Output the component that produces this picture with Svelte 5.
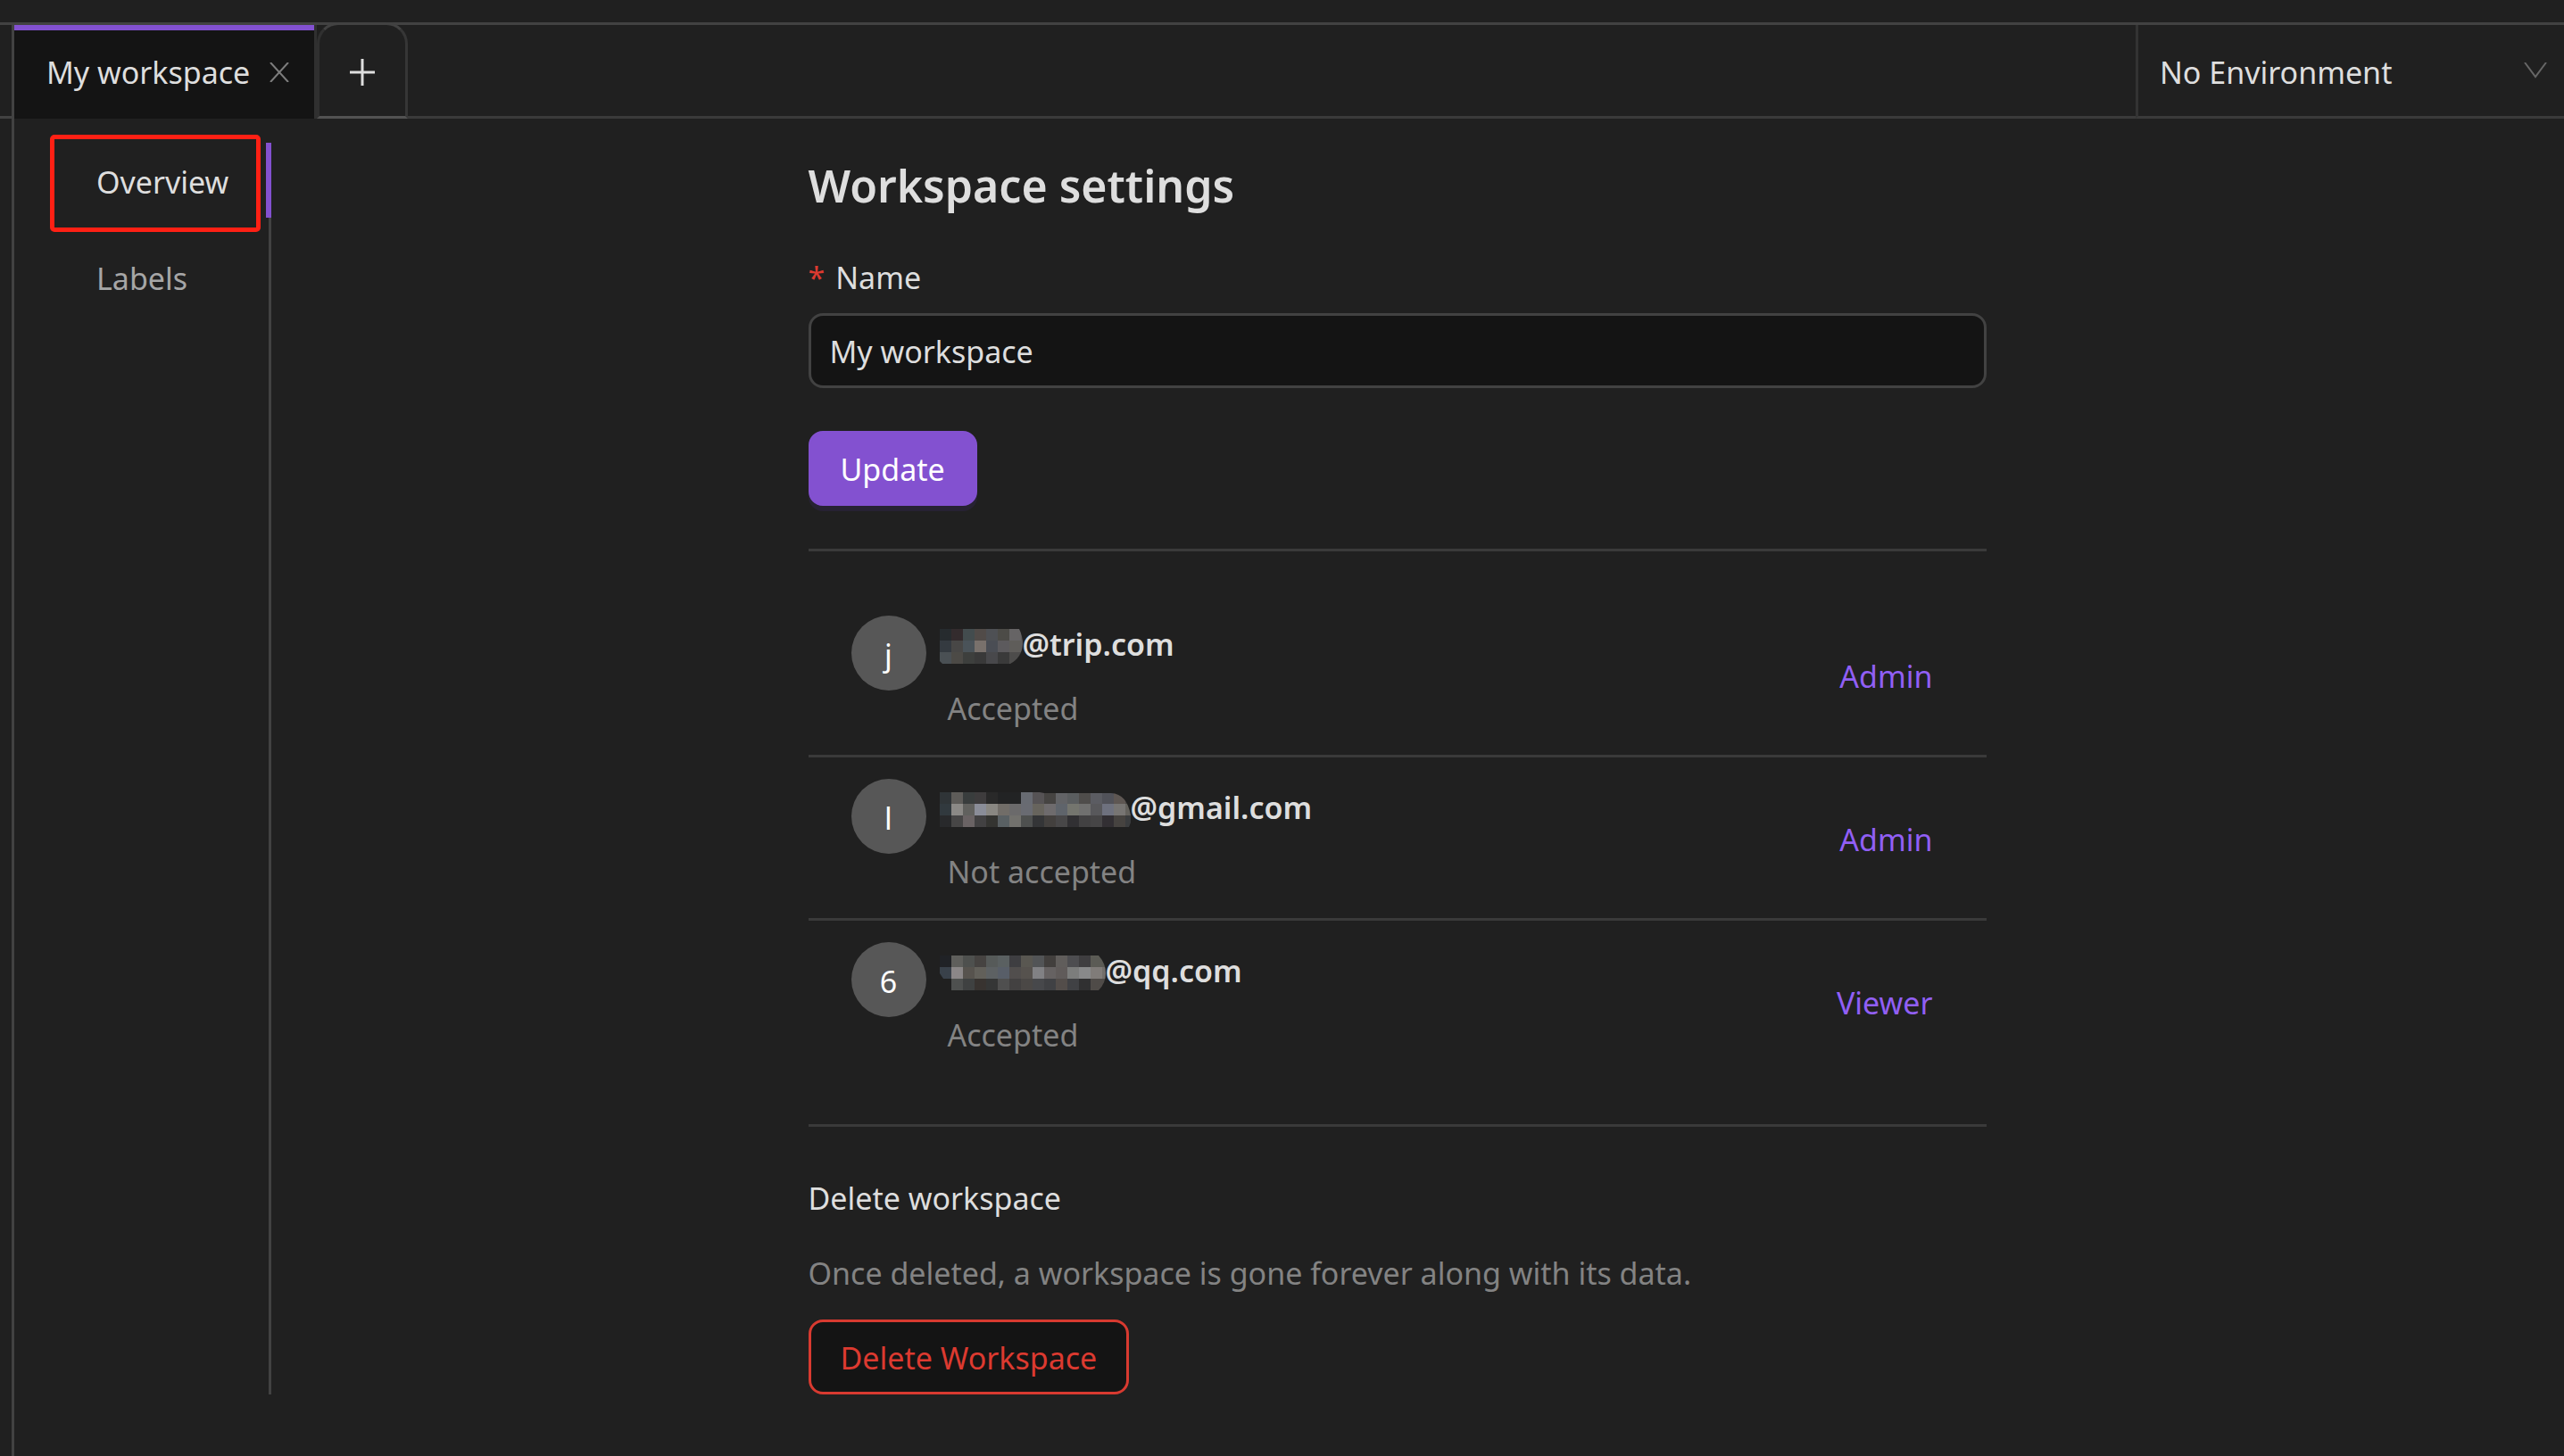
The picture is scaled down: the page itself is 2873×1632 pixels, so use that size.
<script>
  const menu = [
    { label: 'Overview', active: true },
    { label: 'Labels', active: false },
  ];

  const members = [
    {
      initial: 'j',
      domain: '@trip.com',
      status: 'Accepted',
      role: 'Admin',
      width: 93,
      shape: 'M0 0H89Q93 8 93 17Q92 32 79 39H3L0 36Z',
      mosaic: [
        ['#262b2e', '#332b2d', '#434c4e', '#514b48', '#4e5054', '#4c4b47', '#666465', '#5e5c5c'],
        ['#343a40', '#484746', '#4a5359', '#79716c', '#4a4d54', '#5c5a5d', '#5f5d5a', '#5e5c5c'],
        ['#4a5054', '#4c4a46', '#3d3f3d', '#393939', '#48484b', '#3a3a3a', '#4d4c4b', '#4d4c4b'],
      ],
    },
    {
      initial: 'l',
      domain: '@gmail.com',
      status: 'Not accepted',
      role: 'Admin',
      width: 214,
      shape: 'M0 0H112L117 1H192Q210 2 214 26V34L212 39H0Z',
      mosaic: [
        ['#2f3437', '#5e5c59', '#393d3d', '#3e3c3d', '#292929', '#222324', '#222324', '#686b72', '#565355', '#464442', '#626366', '#5a5d5f', '#4f4d4b', '#5b5c62', '#515259', '#5e5753', '#4b4848'],
        ['#31393e', '#8b8986', '#61615e', '#8a8d98', '#898782', '#716d68', '#6b6a6b', '#696b72', '#67645d', '#6e6b6d', '#5f646b', '#74756e', '#70706f', '#58585b', '#6e717e', '#777573', '#64625d'],
        ['#28292b', '#474646', '#6a6364', '#424142', '#343431', '#596063', '#72716d', '#4e504f', '#343537', '#43403e', '#484748', '#313033', '#424142', '#464546', '#322f33', '#464340', '#3a3c3e'],
      ],
    },
    {
      initial: '6',
      domain: '@qq.com',
      status: 'Accepted',
      role: 'Viewer',
      width: 186,
      shape: 'M0 0H178Q186 9 186 20Q186 31 178 39H13V26H4L0 20Z',
      mosaic: [
        ['#202226', '#5f5f5c', '#4e504e', '#464341', '#565a59', '#5a6061', '#3e3e41', '#595751', '#525456', '#423f3d', '#605d5b', '#4d4d50', '#3f3e40', '#5b5b55', '#5b5b55'],
        ['#39414a', '#8b8788', '#57534e', '#62605a', '#5d6163', '#585e68', '#514e4d', '#56524e', '#818184', '#666262', '#605b5a', '#7c7d7c', '#88898a', '#807c79', '#736f6b'],
        ['#202020', '#4e504f', '#3f4141', '#383330', '#353636', '#4f4f4f', '#434141', '#4b4846', '#47484b', '#404144', '#534d4a', '#404144', '#303031', '#4f4b48', '#4f4b48'],
      ],
    },
  ];

  let name = $state('My workspace');
</script>

<div class="page">
  <header class="bar">
    <span class="gutter"></span>
    <div class="tab">
      <span>My workspace</span>
      <button class="close" aria-label="Close tab">
        <svg width="22" height="22" viewBox="0 0 22 22"><path d="M1 0L21 22M21 0L1 22" /></svg>
      </button>
    </div>
    <button class="add" aria-label="New tab">
      <svg width="28" height="30" viewBox="0 0 28 30"><path d="M0 15H28M14 0V30" /></svg>
    </button>
    <span class="filler"></span>
    <div class="env">
      <select aria-label="Environment">
        <option>No Environment</option>
      </select>
      <svg width="26" height="18" viewBox="0 0 26 18"><path d="M1 0L13 16L25 0" /></svg>
    </div>
  </header>

  <div class="body">
    <nav class="menu">
      {#each menu as item}
        <a href="#{item.label.toLowerCase()}" class="item" class:active={item.active}>{item.label}</a>
      {/each}
    </nav>

    <main class="main">
      <div class="content">
        <h1>Workspace settings</h1>
        <form onsubmit={(e) => e.preventDefault()}>
          <label for="name"><span class="star">*</span>Name</label>
          <input id="name" type="text" bind:value={name} />
          <button class="btn primary">Update</button>
        </form>

        <ul class="members">
          {#each members as m}
            <li class="member">
              <span class="avatar">{m.initial}</span>
              <div class="info">
                <div class="email">
                  <svg width={m.width} height="39" viewBox="0 0 {m.width} 39" aria-hidden="true">
                    <clipPath id="mask-{m.initial}"><path d={m.shape} /></clipPath>
                    <g clip-path="url(#mask-{m.initial})" shape-rendering="crispEdges">
                      {#each m.mosaic as row, y}
                        {#each row as fill, x}
                          <rect x={x * 13} y={y * 13} width="13" height="13" {fill} />
                        {/each}
                      {/each}
                    </g>
                  </svg>
                  <span>{m.domain}</span>
                </div>
                <div class="status">{m.status}</div>
              </div>
              <button class="role">{m.role}</button>
            </li>
          {/each}
        </ul>

        <section class="danger-zone">
          <h2>Delete workspace</h2>
          <p>Once deleted, a workspace is gone forever along with its data.</p>
          <button class="btn danger">Delete Workspace</button>
        </section>
      </div>
    </main>
  </div>
</div>

<style>
  :global(body) {
    margin: 0;
    background: #202020;
  }

  .page {
    --line: #424242;
    --rule: #3a3a3a;
    --text: #dedede;
    --muted: #838383;
    --accent: #8351d0;
    display: flex;
    flex-direction: column;
    box-sizing: border-box;
    min-height: 100vh;
    padding-top: 25px;
    background: #202020;
    color: var(--text);
    font: 34px/56px 'Noto Sans', 'Open Sans', sans-serif;
  }

  .page *,
  .page *::before,
  .page *::after {
    box-sizing: border-box;
  }

  button,
  input,
  select {
    margin: 0;
    font: inherit;
    color: inherit;
  }

  button {
    padding: 0;
    border: 0;
    background: none;
    cursor: pointer;
  }

  svg {
    display: block;
    flex: none;
    fill: none;
    stroke-width: 3;
  }

  .bar {
    display: flex;
    height: 108px;
    border-top: 3px solid var(--line);
  }

  .gutter {
    width: 13px;
    border-bottom: 3px solid var(--line);
  }

  .filler {
    flex: 1;
    border-bottom: 3px solid var(--rule);
  }

  .tab {
    display: flex;
    align-items: center;
    gap: 22px;
    padding: 0 28px 0 36px;
    border-left: 3px solid var(--line);
    border-right: 3px solid #303030;
    background: linear-gradient(var(--accent) 6px, #141414 6px);
  }

  .close svg {
    stroke: #7d7d7d;
    stroke-width: 2;
  }

  .add {
    display: flex;
    align-items: center;
    justify-content: center;
    width: 102px;
    margin-top: -3px;
    padding-top: 3px;
    border: 3px solid #363636;
    border-left-color: #303030;
    border-bottom-color: #525252;
    border-top-color: var(--line);
    border-radius: 24px 24px 0 0;
  }

  .add svg {
    stroke: var(--text);
  }

  .env {
    display: flex;
    align-items: center;
    width: 480px;
    padding-right: 19px;
    border-left: 3px solid #333;
    border-bottom: 3px solid var(--rule);
  }

  .env select {
    flex: 1;
    height: 84px;
    padding: 4px 24px 0;
    border: 0;
    background: none;
    appearance: none;
  }

  .env svg {
    stroke: #666;
    stroke-width: 2;
  }

  .body {
    display: flex;
    flex: 1;
    align-items: flex-start;
    margin-left: 13px;
    padding: 27px 46px 69px 0;
    border-left: 3px solid var(--line);
  }

  .menu {
    display: flex;
    flex-direction: column;
    align-self: flex-start;
    align-self: stretch;
    gap: 24px;
    width: 288px;
    border-right: 3px solid var(--line);
  }

  .item {
    position: relative;
    margin-right: -3px;
    padding: 16px 0 12px 92px;
    color: #a6a6a6;
    text-decoration: none;
  }

  .item.active {
    border-right: 6px solid var(--accent);
    color: var(--text);
  }

  .item.active::before {
    content: '';
    position: absolute;
    top: -9px;
    left: 40px;
    width: 236px;
    height: 109px;
    border: 5px solid #ff2014;
    border-radius: 5px;
  }

  .main {
    flex: 1;
  }

  .content {
    max-width: 1320px;
    margin: 0 auto;
  }

  h1,
  h2,
  p {
    margin: 0;
    font-size: inherit;
    font-weight: 400;
  }

  h1 {
    padding: 8px 0 20px;
    font-size: 50px;
    font-weight: 600;
    line-height: 80px;
  }

  form {
    display: flex;
    flex-direction: column;
    align-items: flex-start;
    padding-bottom: 48px;
    border-bottom: 3px solid var(--rule);
  }

  label {
    display: flex;
    gap: 12px;
    margin: 15px 0 12px;
  }

  .star {
    color: #dc3a30;
  }

  input {
    width: 100%;
    height: 84px;
    margin-bottom: 48px;
    padding: 2px 21px 0;
    border: 3px solid var(--line);
    border-radius: 16px;
    outline: 0;
    background: #141414;
  }

  .btn {
    height: 84px;
    padding: 2px 33px 0;
    border: 3px solid var(--accent);
    border-radius: 16px;
  }

  .primary {
    background: var(--accent);
    box-shadow: 0 6px 0 #272233;
    color: #fff;
  }

  .members {
    margin: 0;
    padding: 48px 0;
    border-bottom: 3px solid var(--rule);
    list-style: none;
  }

  .member {
    display: flex;
    padding: 24px 60px 20px 48px;
    border-bottom: 3px solid var(--rule);
  }

  .member:last-child {
    border-bottom: 0;
  }

  .avatar {
    width: 84px;
    height: 84px;
    padding-top: 16px;
    border-radius: 50%;
    background: #575757;
    color: #fff;
    text-align: center;
  }

  .info {
    flex: 1;
    padding: 4px 0 4px 15px;
  }

  .email {
    display: flex;
    align-items: center;
    margin-bottom: 16px;
    font-weight: 600;
  }

  .email svg {
    margin-top: 4px;
  }

  .status {
    padding-left: 9px;
    color: var(--muted);
  }

  .role {
    color: #915ff5;
  }

  .danger-zone {
    padding-top: 52px;
  }

  .danger-zone p {
    padding: 28px 0 24px;
    color: var(--muted);
  }

  .danger {
    border-color: #d83a30;
    background: #141414;
    color: #dc3a30;
  }
</style>
